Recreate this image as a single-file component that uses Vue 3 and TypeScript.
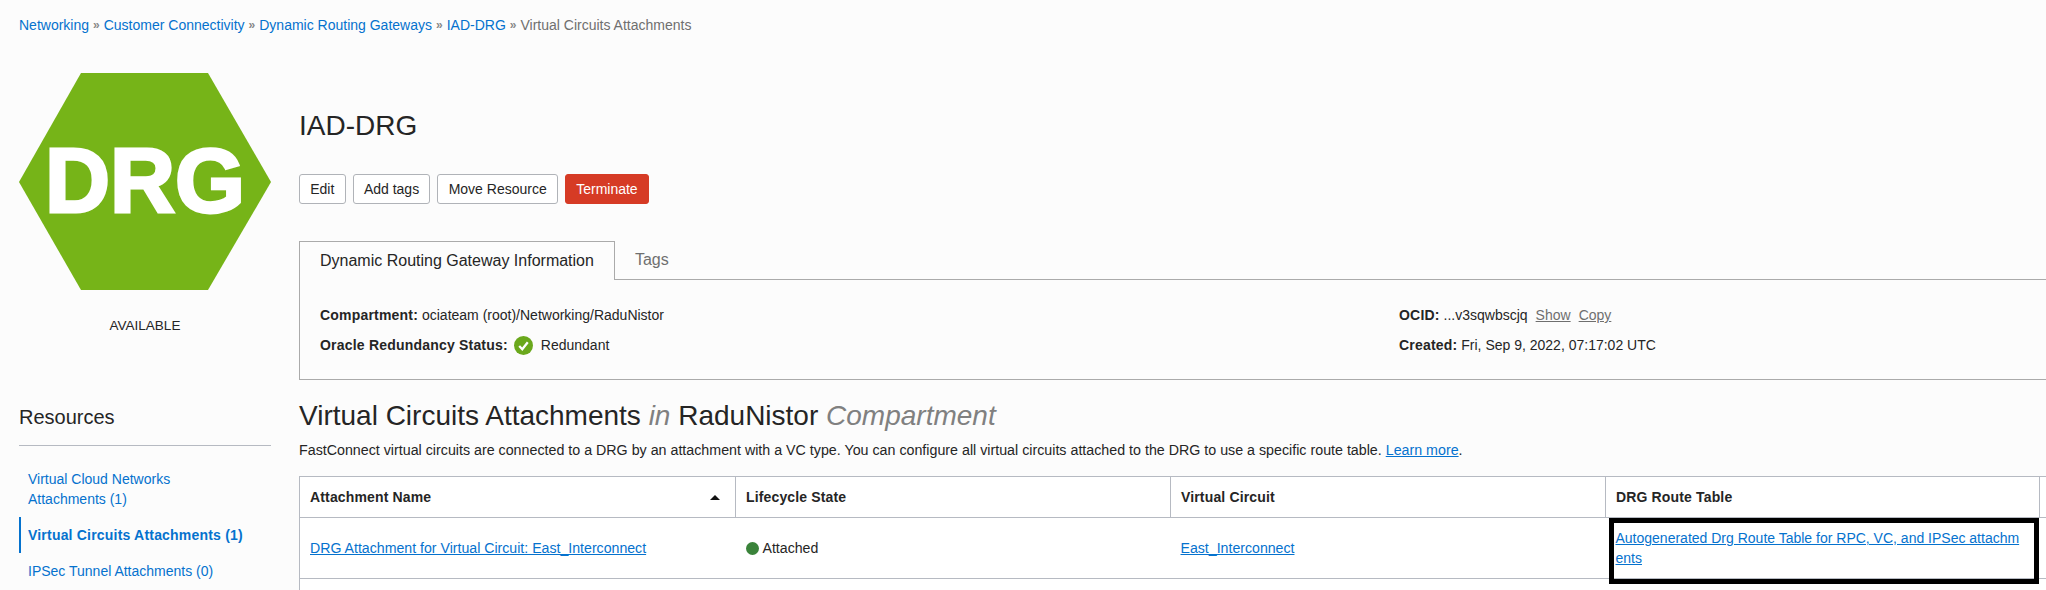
<script setup lang="ts">
const crumbs = ["Networking", "Customer Connectivity", "Dynamic Routing Gateways", "IAD-DRG"];
const buttons = ["Edit", "Add tags", "Move Resource"];
</script>

<template>
  <div class="page">
    <nav class="crumbs">
      <template v-for="c in crumbs" :key="c">
        <a class="link plain">{{ c }}</a><span class="sep">»</span>
      </template>
      <span class="current">Virtual Circuits Attachments</span>
    </nav>

    <div class="body">
      <aside class="side">
        <div class="hex">
          <svg class="hex-bg" viewBox="0 0 252 217" width="252" height="217">
            <polygon points="62,0 189,0 252,109 189,217 62,217 0,109" fill="#76b418" />
          </svg>
          <span class="hex-text">DRG</span>
        </div>
        <div class="state">AVAILABLE</div>
        <h3 class="res-title">Resources</h3>
        <ul class="res-list">
          <li><a class="link plain">Virtual Cloud Networks Attachments (1)</a></li>
          <li class="active"><a class="link plain">Virtual Circuits Attachments (1)</a></li>
          <li><a class="link plain">IPSec Tunnel Attachments (0)</a></li>
        </ul>
      </aside>

      <main class="main">
        <h1 class="title">IAD-DRG</h1>
        <div class="actions">
          <button v-for="b in buttons" :key="b" class="btn">{{ b }}</button>
          <button class="btn danger">Terminate</button>
        </div>

        <div class="tabs">
          <div class="tab on">Dynamic Routing Gateway Information</div>
          <div class="tab">Tags</div>
          <div class="tab-rest"></div>
        </div>
        <div class="panel">
          <div class="col">
            <div class="line"><b>Compartment:</b> ociateam (root)/Networking/RaduNistor</div>
            <div class="line">
              <b>Oracle Redundancy Status:</b>
              <svg class="check" viewBox="0 0 20 20" width="19" height="19">
                <circle cx="10" cy="10" r="10" fill="#6aa81c" />
                <path d="M5.5 10.5l3.2 3.4 5.8-7.4" fill="none" stroke="#fff" stroke-width="2.4" />
              </svg>
              <span>Redundant</span>
            </div>
          </div>
          <div class="col">
            <div class="line">
              <b>OCID:</b> ...v3sqwbscjq<a class="mini">Show</a><a class="mini">Copy</a>
            </div>
            <div class="line"><b>Created:</b> Fri, Sep 9, 2022, 07:17:02 UTC</div>
          </div>
        </div>

        <h2 class="section">Virtual Circuits Attachments <i>in</i> RaduNistor <i>Compartment</i></h2>
        <p class="desc">
          FastConnect virtual circuits are connected to a DRG by an attachment with a VC type. You can configure all
          virtual circuits attached to the DRG to use a specific route table. <a class="link">Learn more</a>.
        </p>

        <table class="grid">
          <colgroup>
            <col class="c1" />
            <col class="c2" />
            <col class="c3" />
            <col class="c4" />
            <col />
          </colgroup>
          <thead>
            <tr>
              <th><span class="th-in">Attachment Name<i class="sort"></i></span></th>
              <th>Lifecycle State</th>
              <th>Virtual Circuit</th>
              <th>DRG Route Table</th>
              <th></th>
            </tr>
          </thead>
          <tbody>
            <tr>
              <td><a class="link">DRG Attachment for Virtual Circuit: East_Interconnect</a></td>
              <td><i class="dot"></i>Attached</td>
              <td><a class="link">East_Interconnect</a></td>
              <td class="marked">
                <a class="link">Autogenerated Drg Route Table for RPC, VC, and IPSec attachments</a>
                <div class="mark"></div>
              </td>
              <td></td>
            </tr>
            <tr class="empty">
              <td colspan="5"></td>
            </tr>
          </tbody>
        </table>
      </main>
    </div>
  </div>
</template>

<style>
html,
body {
  margin: 0;
  overflow: hidden;
  background: #fcfcfc;
}
</style>

<style scoped>
.page {
  width: 2046px;
  height: 590px;
  overflow: hidden;
  font-family: "Liberation Sans", Arial, sans-serif;
  font-size: 14px;
  color: #252525;
  background: #fcfcfc;
}

.link {
  color: #0572ce;
  text-decoration: underline;
}

.link.plain {
  text-decoration: none;
}

.crumbs {
  height: 50px;
  padding-left: 19px;
  display: flex;
  align-items: center;
  font-size: 14px;
  white-space: nowrap;
}

.sep {
  color: #888;
  margin: 0 4px;
  font-size: 12px;
  font-weight: 700;
}

.current {
  color: #6f6f6f;
}

.body {
  display: flex;
  padding-left: 19px;
  gap: 28px;
}

.side {
  width: 252px;
  flex: none;
  padding-top: 23px;
}

.hex {
  position: relative;
  width: 252px;
  height: 217px;
}

.hex-bg {
  display: block;
}

.hex-text {
  position: absolute;
  inset: 0;
  display: flex;
  align-items: center;
  justify-content: center;
  color: #fff;
  font-size: 90px;
  font-weight: 700;
  -webkit-text-stroke: 3px #fff;
}

.state {
  margin-top: 28px;
  text-align: center;
  font-size: 13.5px;
  line-height: 16px;
}

.res-title {
  margin: 71px 0 0;
  font-size: 20px;
  font-weight: 400;
  line-height: 24px;
  padding-bottom: 16px;
  border-bottom: 1px solid #b6bac2;
}

.res-list {
  list-style: none;
  margin: 15px 0 0;
  padding: 0;
  font-size: 14px;
  line-height: 20px;
}

.res-list li {
  padding: 8px 30px 8px 7px;
  border-left: 2px solid transparent;
}

.res-list li.active {
  border-left-color: #0572ce;
  font-weight: 700;
  letter-spacing: 0.2px;
  padding-right: 0;
}

.main {
  flex: 1;
  min-width: 0;
}

.title {
  margin: 0;
  padding-top: 52px;
  font-size: 28px;
  font-weight: 400;
  line-height: 48px;
}

.actions {
  display: flex;
  gap: 7px;
  margin-top: 24px;
}

.btn {
  height: 30px;
  padding: 0 10.25px;
  border: 1px solid #b0b3b8;
  border-radius: 3px;
  background: #fff;
  color: #252525;
  font: inherit;
}

.btn.danger {
  background: #d63b25;
  border-color: #d63b25;
  color: #fff;
}

.tabs {
  display: flex;
  margin-top: 37px;
  height: 39px;
  font-size: 16px;
}

.tab {
  padding: 0 20px;
  line-height: 37px;
  color: #6f6f6f;
  border-bottom: 1px solid #aaa;
}

.tab.on {
  color: #252525;
  border: 1px solid #aaa;
  border-bottom: 0;
}

.tab-rest {
  flex: 1;
  border-bottom: 1px solid #aaa;
}

.panel {
  display: grid;
  grid-template-columns: 1079px 1fr;
  height: 100px;
  padding: 20px 0 0 20px;
  box-sizing: border-box;
  border-left: 1px solid #aaa;
  border-bottom: 1px solid #aaa;
}

.line {
  display: flex;
  align-items: center;
  height: 30px;
  white-space: pre-wrap;
}

.line b {
  letter-spacing: 0.2px;
}

.check {
  margin: 0 8px 0 6px;
}

.mini {
  color: #6f6f6f;
  text-decoration: underline;
  margin-left: 8px;
}

.section {
  margin: 20px 0 0;
  font-size: 28px;
  font-weight: 400;
  line-height: 32px;
}

.section i {
  color: #808080;
}

.desc {
  margin: 8px 0 0;
  font-size: 14.26px;
  line-height: 20px;
}

.grid {
  margin-top: 16px;
  width: 1760px;
  table-layout: fixed;
  border-collapse: collapse;
  background: #fff;
}

.c1 {
  width: 436px;
}

.c2 {
  width: 435px;
}

.c3 {
  width: 435px;
}

.c4 {
  width: 434px;
}

th,
td {
  padding: 0 10px;
  text-align: left;
  vertical-align: middle;
  line-height: 20px;
}

th {
  height: 40px;
  font-weight: 700;
  letter-spacing: 0.15px;
  border: 1px solid #b6bac2;
}

td {
  height: 60px;
  font-size: 14.15px;
  border-bottom: 1px solid #b6bac2;
  word-break: break-all;
}

td:first-child {
  border-left: 1px solid #b6bac2;
}

.th-in {
  display: flex;
  align-items: center;
  justify-content: space-between;
  padding-right: 5px;
}

.sort {
  width: 0;
  height: 0;
  border-left: 5px solid transparent;
  border-right: 5px solid transparent;
  border-bottom: 5px solid #111;
}

.dot {
  display: inline-block;
  width: 13px;
  height: 13px;
  border-radius: 50%;
  background: #3a833a;
  margin-right: 4px;
  vertical-align: -2px;
}

.marked {
  position: relative;
  font-size: 14px;
  padding-right: 14px;
}

.mark {
  position: absolute;
  left: 3px;
  right: 1px;
  top: 0;
  bottom: -6px;
  border: 5px solid #000;
}

.empty td {
  height: 40px;
  border-bottom: 0;
}
</style>
